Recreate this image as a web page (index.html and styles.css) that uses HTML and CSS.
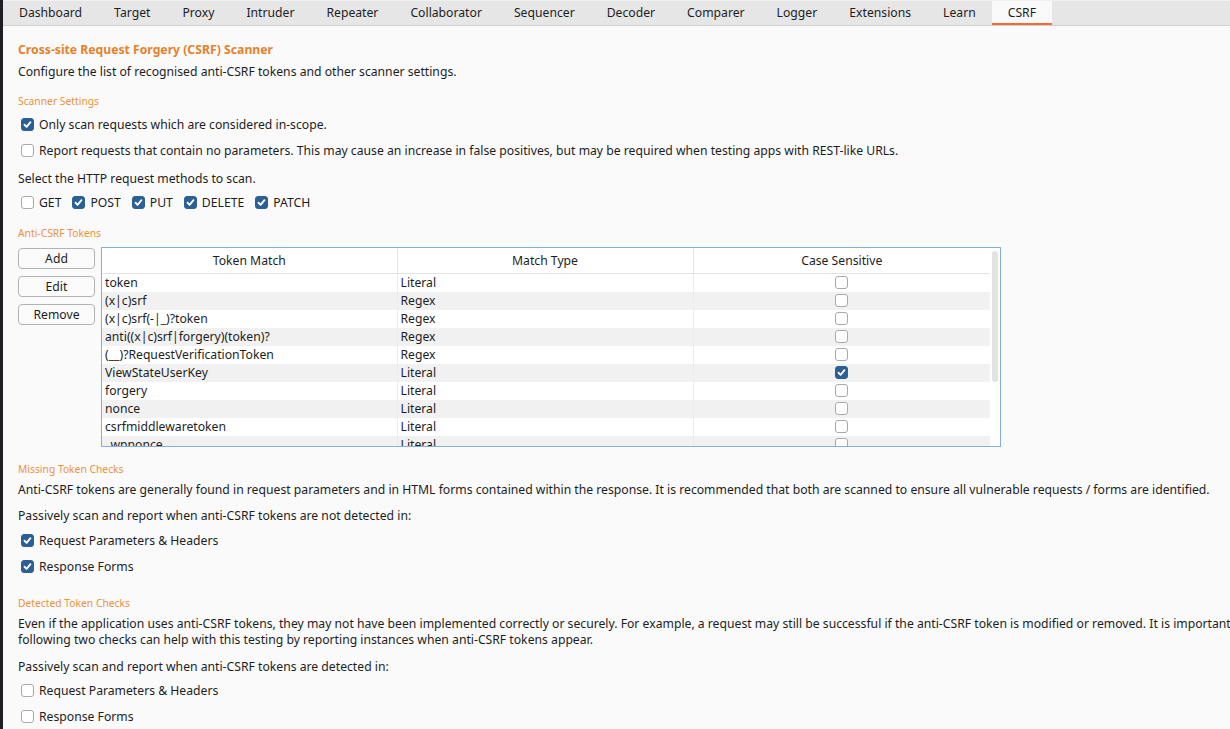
FILE: index.html
```html
<!DOCTYPE html>
<html>
<head>
<meta charset="utf-8">
<link rel="stylesheet" href="styles.css">
</head>
<body>
<div class="app">
  <nav class="tabs">
    <span class="tab">Dashboard</span>
    <span class="tab">Target</span>
    <span class="tab">Proxy</span>
    <span class="tab">Intruder</span>
    <span class="tab">Repeater</span>
    <span class="tab">Collaborator</span>
    <span class="tab">Sequencer</span>
    <span class="tab">Decoder</span>
    <span class="tab">Comparer</span>
    <span class="tab">Logger</span>
    <span class="tab">Extensions</span>
    <span class="tab">Learn</span>
    <span class="tab active">CSRF</span>
  </nav>
  <main class="content">
    <h1 class="title">Cross-site Request Forgery (CSRF) Scanner</h1>
    <p class="line m4">Configure the list of recognised anti-CSRF tokens and other scanner settings.</p>

    <h2 class="section m13">Scanner Settings</h2>
    <label class="check m6"><span class="box on"><svg viewBox="0 0 13 13"><path d="M3 6.8 L5.4 9.2 L10 3.8"/></svg></span>Only scan requests which are considered in-scope.</label>
    <label class="check m6"><span class="box"></span>Report requests that contain no parameters. This may cause an increase in false positives, but may be required when testing apps with REST-like URLs.</label>
    <p class="line m10">Select the HTTP request methods to scan.</p>
    <div class="methods m4">
      <label class="check"><span class="box"></span>GET</label>
      <label class="check"><span class="box on"><svg viewBox="0 0 13 13"><path d="M3 6.8 L5.4 9.2 L10 3.8"/></svg></span>POST</label>
      <label class="check"><span class="box on"><svg viewBox="0 0 13 13"><path d="M3 6.8 L5.4 9.2 L10 3.8"/></svg></span>PUT</label>
      <label class="check"><span class="box on"><svg viewBox="0 0 13 13"><path d="M3 6.8 L5.4 9.2 L10 3.8"/></svg></span>DELETE</label>
      <label class="check"><span class="box on"><svg viewBox="0 0 13 13"><path d="M3 6.8 L5.4 9.2 L10 3.8"/></svg></span>PATCH</label>
    </div>

    <h2 class="section m14">Anti-CSRF Tokens</h2>
    <div class="tokens">
      <div class="buttons">
        <button class="btn">Add</button>
        <button class="btn">Edit</button>
        <button class="btn">Remove</button>
      </div>
      <div class="tablebox">
        <div class="tablescroll">
          <table class="grid">
            <colgroup><col class="c1"><col class="c2"><col class="c3"></colgroup>
            <thead>
              <tr><th>Token Match</th><th>Match Type</th><th>Case Sensitive</th></tr>
            </thead>
            <tbody>
              <tr><td>token</td><td>Literal</td><td class="cb"><span class="box"></span></td></tr>
              <tr><td>(x|c)srf</td><td>Regex</td><td class="cb"><span class="box"></span></td></tr>
              <tr><td>(x|c)srf(-|_)?token</td><td>Regex</td><td class="cb"><span class="box"></span></td></tr>
              <tr><td>anti((x|c)srf|forgery)(token)?</td><td>Regex</td><td class="cb"><span class="box"></span></td></tr>
              <tr><td>(__)?RequestVerificationToken</td><td>Regex</td><td class="cb"><span class="box"></span></td></tr>
              <tr><td>ViewStateUserKey</td><td>Literal</td><td class="cb"><span class="box on"><svg viewBox="0 0 13 13"><path d="M3 6.8 L5.4 9.2 L10 3.8"/></svg></span></td></tr>
              <tr><td>forgery</td><td>Literal</td><td class="cb"><span class="box"></span></td></tr>
              <tr><td>nonce</td><td>Literal</td><td class="cb"><span class="box"></span></td></tr>
              <tr><td>csrfmiddlewaretoken</td><td>Literal</td><td class="cb"><span class="box"></span></td></tr>
              <tr><td>_wpnonce</td><td>Literal</td><td class="cb"><span class="box"></span></td></tr>
            </tbody>
          </table>
        </div>
        <div class="scrollbar"><div class="thumb"></div></div>
      </div>
    </div>

    <h2 class="section m15">Missing Token Checks</h2>
    <p class="line m5 nowrap">Anti-CSRF tokens are generally found in request parameters and in HTML forms contained within the response. It is recommended that both are scanned to ensure all vulnerable requests / forms are identified.</p>
    <p class="line m8">Passively scan and report when anti-CSRF tokens are not detected in:</p>
    <label class="check m5"><span class="box on"><svg viewBox="0 0 13 13"><path d="M3 6.8 L5.4 9.2 L10 3.8"/></svg></span>Request Parameters &amp; Headers</label>
    <label class="check m6"><span class="box on"><svg viewBox="0 0 13 13"><path d="M3 6.8 L5.4 9.2 L10 3.8"/></svg></span>Response Forms</label>

    <h2 class="section m20">Detected Token Checks</h2>
    <p class="para m6 nowrap">Even if the application uses anti-CSRF tokens, they may not have been implemented correctly or securely. For example, a request may still be successful if the anti-CSRF token is modified or removed. It is important to test for these issues. The<br>following two checks can help with this testing by reporting instances when anti-CSRF tokens appear.</p>
    <p class="line m10">Passively scan and report when anti-CSRF tokens are detected in:</p>
    <label class="check m4"><span class="box"></span>Request Parameters &amp; Headers</label>
    <label class="check m6"><span class="box"></span>Response Forms</label>
  </main>
</div>
</body>
</html>
```
FILE: styles.css
```css
* { box-sizing: border-box; }
html, body {
  margin: 0;
  padding: 0;
  width: 1230px;
  height: 729px;
  overflow: hidden;
  background: #1e1f24;
}
body {
  font-family: "Noto Sans", "Open Sans", sans-serif;
  font-size: 12.2px;
  color: #1d1d1d;
}
.app {
  margin-left: 3px;
  height: 729px;
  background: #fafafa;
  display: flex;
  flex-direction: column;
  overflow: hidden;
}
.tabs {
  display: flex;
  height: 26px;
  background: #e6e6e6;
  border-top: 1px solid #f0f0f0;
  border-bottom: 1px solid #cfcfcf;
  flex: none;
}
.tab {
  padding: 0 16px;
  line-height: 24px;
  height: 24px;
  white-space: nowrap;
  color: #1d1d1d;
}
.tab.active {
  background: #f9f9f9;
  border-bottom: 2px solid #f4683a;
  line-height: 23px;
}
.content {
  padding-left: 15px;
  display: flex;
  flex-direction: column;
  align-items: flex-start;
}
.title {
  margin: 15px 0 0;
  font-size: 12.2px;
  font-weight: bold;
  line-height: 18px;
  color: #e5812c;
}
.line {
  margin: 0;
  line-height: 18px;
}
.para {
  margin: 0;
  line-height: 16px;
}
.nowrap { white-space: nowrap; }
.section {
  margin: 0;
  font-size: 10.3px;
  font-weight: normal;
  line-height: 14px;
  color: #eb9240;
}
.m4 { margin-top: 4px; }
.m5 { margin-top: 5px; }
.m6 { margin-top: 6px; }
.m8 { margin-top: 8px; }
.m10 { margin-top: 10px; }
.m13 { margin-top: 13px; }
.m14 { margin-top: 14px; }
.m15 { margin-top: 15px; }
.m20 { margin-top: 20px; }

.check {
  display: flex;
  align-items: center;
  height: 20px;
  white-space: nowrap;
}
.check .box { margin: 0 5px 0 3px; }
.box {
  display: inline-block;
  width: 13px;
  height: 13px;
  border: 1px solid #a9a9a9;
  border-radius: 3px;
  background: #fff;
  flex: none;
  vertical-align: middle;
}
.box.on {
  background: #2d5f97;
  border-color: #2d5f97;
}
.box svg {
  display: block;
  width: 11px;
  height: 11px;
}
.box svg path {
  fill: none;
  stroke: #fff;
  stroke-width: 2.2;
  stroke-linecap: round;
  stroke-linejoin: round;
}
.methods {
  display: flex;
}
.methods .check { margin-right: 8px; }

.tokens {
  margin-top: 7px;
  display: flex;
  align-items: flex-start;
  gap: 6px;
}
.buttons {
  display: flex;
  flex-direction: column;
  gap: 7px;
  padding-top: 1px;
}
.btn {
  width: 77px;
  height: 21px;
  padding: 0;
  font-family: inherit;
  font-size: 12.2px;
  color: #1d1d1d;
  background: #fbfbfb;
  border: 1px solid #b3b3b3;
  border-radius: 4px;
}
.tablebox {
  width: 900px;
  height: 200px;
  border: 1px solid #86aed8;
  background: #fff;
  display: flex;
  overflow: hidden;
}
.tablescroll {
  width: 888px;
  height: 198px;
  overflow: hidden;
}
.grid {
  width: 888px;
  border-collapse: collapse;
  table-layout: fixed;
}
.c1 { width: 295px; }
.c2 { width: 296px; }
.c3 { width: 297px; }
.grid th {
  height: 25px;
  font-weight: normal;
  text-align: center;
  border-bottom: 1px solid #e2e2e2;
  border-left: 1px solid #e6e6e6;
  background: #fff;
  padding: 0;
}
.grid th:first-child { border-left: none; }
.grid td {
  height: 18px;
  padding: 0 0 0 3px;
  line-height: 18px;
  white-space: nowrap;
  overflow: hidden;
  border-left: 1px solid #ececec;
}
.grid td:first-child { border-left: none; }
.grid tbody tr:nth-child(even) td { background: #f1f1f1; }
.grid td.cb {
  text-align: center;
  padding: 0;
}
.grid td.cb .box {
  margin-top: -2px;
}
.scrollbar {
  width: 10px;
  height: 198px;
  padding: 3px 2px 0 2px;
}
.thumb {
  width: 6px;
  height: 131px;
  background: #e3e3e3;
  border-radius: 3px;
}
```
